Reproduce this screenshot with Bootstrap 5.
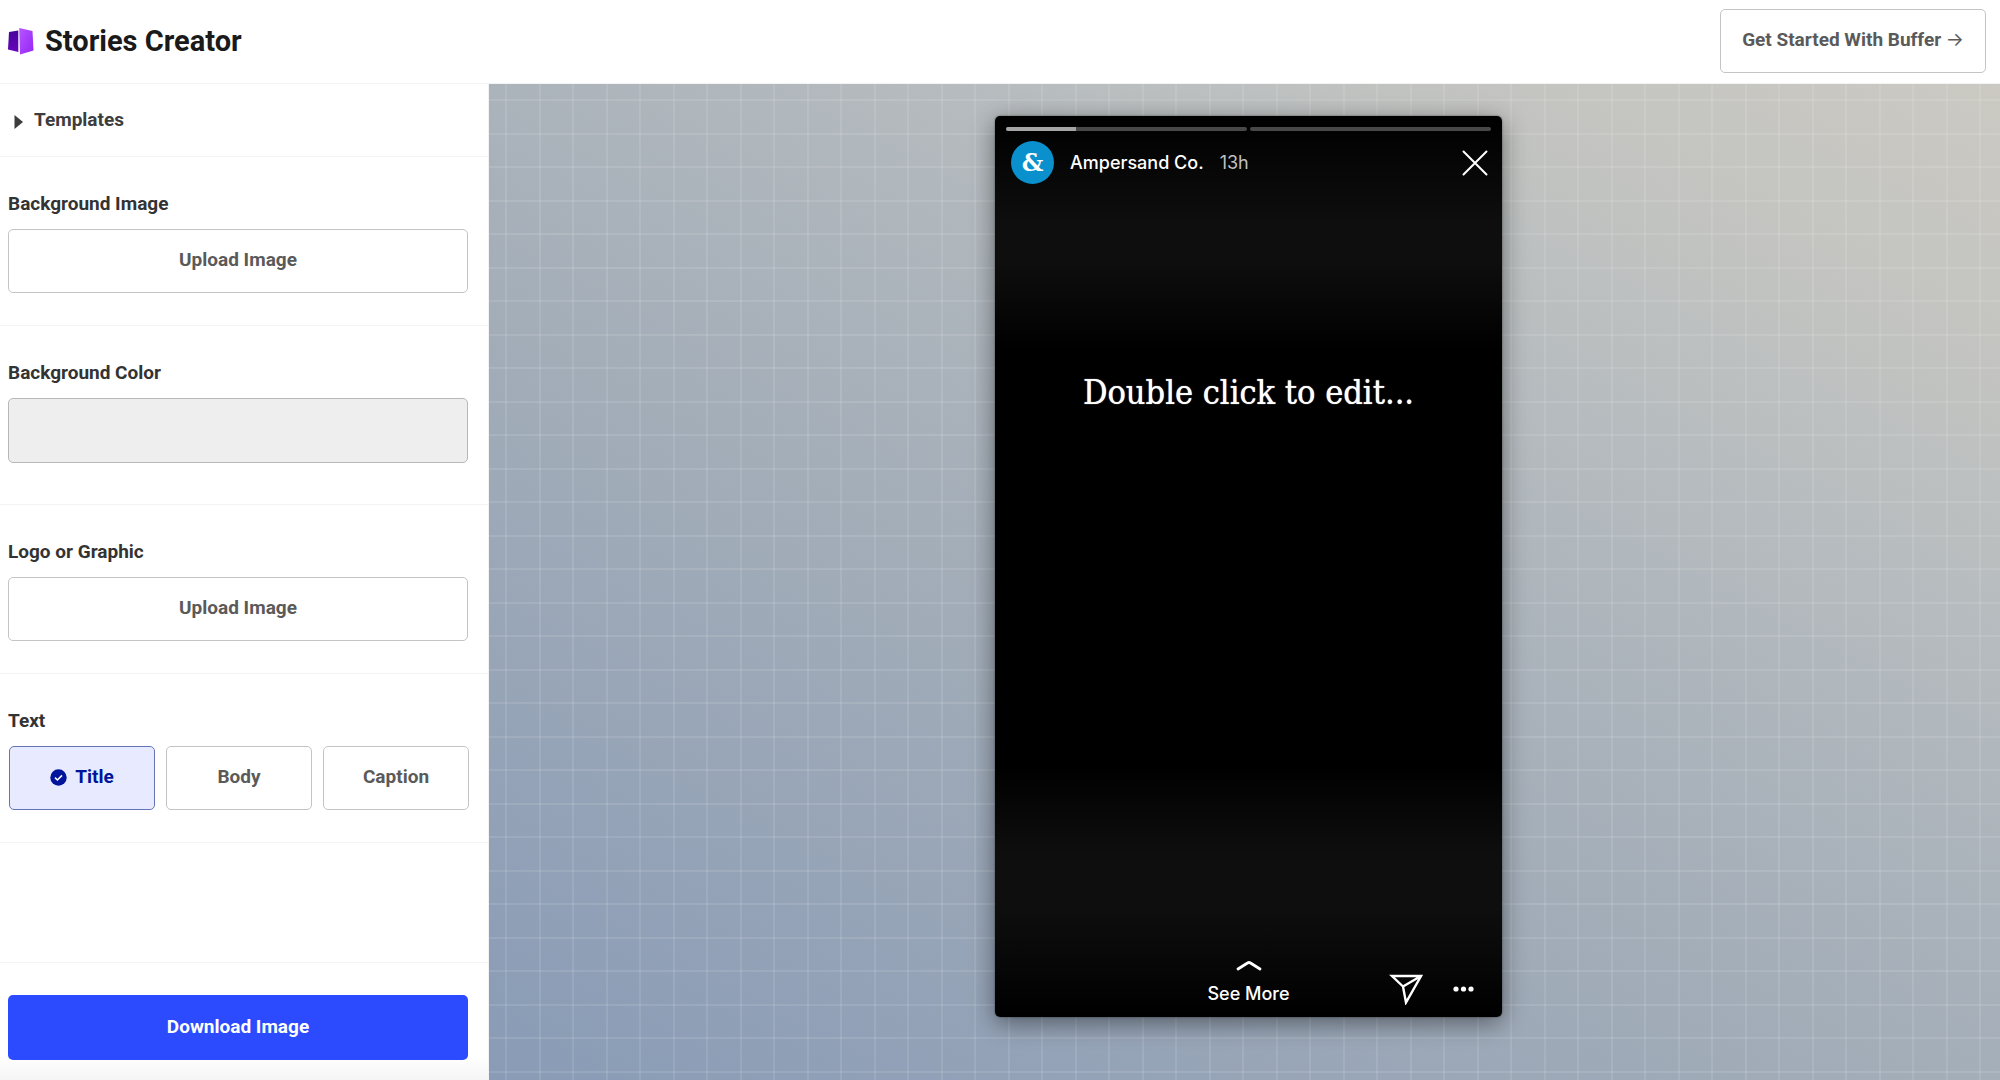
<!DOCTYPE html>
<html lang="en">
<head>
<meta charset="utf-8">
<meta name="viewport" content="width=device-width, initial-scale=1">
<title>Stories Creator</title>
<link href="https://cdn.jsdelivr.net/npm/bootstrap@5.3.0/dist/css/bootstrap.min.css" rel="stylesheet">
<style>
body { font-family: Roboto, "Liberation Sans", sans-serif; font-size: 19px; line-height: 24px; color: #333; background: #fff; }
.topbar { height: 84px; padding: 0 14px 2px 8px; border-bottom: 1px solid #f3f3f3; }
.brand { gap: 11px; font-size: 29px; line-height: 36px; font-weight: 700; color: #1a1a1a; }
.brand:hover { color: #1a1a1a; }
.tool-btn { min-height: 64px; padding-bottom: 8px; border: 1px solid #c4c4c4; border-radius: 5px; background: #fff; color: #5a5a5a; font-size: 19px; line-height: 24px; font-weight: 700; }
.tool-btn:hover { background: #f5f5f5; border-color: #b8b8b8; color: #3d3d3d; }
.start-btn { padding-left: 21px; padding-right: 21px; }
.arrow { font-family: Inter, sans-serif; font-weight: 400; }
.side { width: 489px; border-right: 1px solid #f3f3f3; }
.section { padding: 35px 20px 32px 8px; border-bottom: 1px solid #f3f3f3; }
.section-label { display: block; margin-bottom: 13px; font-weight: 700; color: #333; }
.templates { padding: 24px 14px; gap: 11px; border: 0; border-bottom: 1px solid #f3f3f3; background: #fff; color: #3d3d3d; font-weight: 700; }
.color-field { padding-bottom: 41px; }
.color-box { height: 65px; border: 1px solid #b8b8b8; border-radius: 5px; background: #eee; }
.kinds { gap: 11px; padding-left: 1px; margin-right: -1px; }
.btn-check:checked + .tool-btn { background: #e8ebff; border-color: #6374b8; color: #00149c; }
.side-foot { padding: 32px 20px 20px 8px; border-top: 1px solid #f3f3f3; background: linear-gradient(#fff 80%, #f5f5f5); }
.save-btn, .save-btn:hover { min-height: 65px; padding-bottom: 8px; border: 0; border-radius: 5px; background: #2c4bff; color: #fff; font-size: 19px; line-height: 24px; font-weight: 700; }
.stage {
  padding: 32px 0 32px 8px;
  background:
    repeating-linear-gradient(90deg, transparent 0 16px, rgba(255,255,255,.1) 16px 18px, transparent 18px 50px, rgba(255,255,255,.1) 50px 52px, transparent 52px 67px),
    repeating-linear-gradient(180deg, transparent 0 15px, rgba(255,255,255,.1) 15px 17px, transparent 17px 49px, rgba(255,255,255,.1) 49px 51px, transparent 51px 67px),
    linear-gradient(28deg, #899bb6 0%, #a3adb8 42%, #abb3bb 55%, #b8bdbf 72%, #c3c4c1 84%, #cbc9c2 100%);
}
.story {
  width: 507px; min-height: 901px; padding: 11px; border-radius: 5px; color: #fff; font-size: 18px;
  background: linear-gradient(#000 0, #0e0e0e 12%, #0e0e0e 16%, #000 26%, #000 72%, #0e0e0e 82%, #0e0e0e 88%, #000 100%);
  box-shadow: 0 6px 24px rgba(0,0,0,.45), 0 0 2px rgba(0,0,0,.5);
}
.bars { gap: 3px; }
.story-bar { height: 4px; border-radius: 2px; background: #484848; --bs-progress-bar-bg: #a5a5a5; }
.who { padding: 10px 3px 0 5px; }
.avatar { width: 43px; height: 43px; border-radius: 50%; background: #0a90cc; font: 700 24px/43px "DejaVu Serif", serif; margin-right: 16px; }
.who-name { font-family: Inter, sans-serif; font-weight: 500; margin-right: 16px; }
.who-time { font-family: Inter, sans-serif; color: #c0c0c0; }
.plain-btn { border: 0; padding: 0; background: none; color: #fff; line-height: 0; }
.story-title { margin-top: 184px; font: 400 34px/48px "DejaVu Serif Condensed", "DejaVu Serif", serif; text-shadow: 0 0 1px #fff; }
.more { font-family: Inter, sans-serif; font-weight: 500; color: #fff; gap: 11px; }
.more:hover { color: #fff; }
.acts { gap: 30px; padding-top: 12px; margin-right: 17px; }
</style>
</head>
<body class="d-flex flex-column min-vh-100">
<header class="topbar d-flex align-items-center justify-content-between">
  <a class="brand d-flex align-items-center text-decoration-none" href="#">
    <svg width="26" height="28" viewBox="0 0 26 28" aria-hidden="true">
      <defs>
        <linearGradient id="lg" x1="0" y1="0" x2="1" y2="1"><stop offset="0" stop-color="#b855ff"/><stop offset="1" stop-color="#9326f5"/></linearGradient>
        <linearGradient id="dk" x1="0" y1="0" x2="0" y2="1"><stop offset="0" stop-color="#48039a"/><stop offset="1" stop-color="#6704bb"/></linearGradient>
      </defs>
      <path fill="url(#dk)" d="M1 5 10.300 3.500V25L0 22.500z"/>
      <path fill="url(#lg)" d="M11.200 1 24.500 4 25.500 23.500 12 27.500z"/>
    </svg>
    <span>Stories Creator</span>
  </a>
  <button type="button" class="btn tool-btn start-btn">Get Started With Buffer <span class="arrow">→</span></button>
</header>
<div class="d-flex flex-grow-1">
  <aside class="side d-flex flex-column flex-shrink-0">
    <button type="button" class="templates d-flex align-items-center text-start" aria-expanded="false">
      <svg width="9" height="14" viewBox="0 0 9 14" aria-hidden="true" class="mt-1"><path fill="#3d3d3d" d="M.5 0 9 7 .5 14z"/></svg>
      <span>Templates</span>
    </button>
    <div class="section">
      <label class="section-label" for="bg-image">Background Image</label>
      <button type="button" id="bg-image" class="btn tool-btn w-100">Upload Image</button>
    </div>
    <div class="section color-field">
      <label class="section-label" for="bg-color">Background Color</label>
      <button type="button" id="bg-color" class="color-box d-block w-100"></button>
    </div>
    <div class="section">
      <label class="section-label" for="logo-image">Logo or Graphic</label>
      <button type="button" id="logo-image" class="btn tool-btn w-100">Upload Image</button>
    </div>
    <div class="section" role="group" aria-labelledby="text-label">
      <span class="section-label" id="text-label">Text</span>
      <div class="kinds d-flex">
        <input type="radio" class="btn-check" name="kind" id="kind-title" checked>
        <label class="btn tool-btn d-flex flex-fill align-items-center justify-content-center gap-2 w-100" for="kind-title">
          <svg width="17" height="17" viewBox="0 0 17 17" aria-hidden="true"><circle cx="8.500" cy="8.500" r="8.200" fill="#00149c"/><path d="m5 8.700 2.400 2.300 4.600-4.600" fill="none" stroke="#fff" stroke-width="1.600"/></svg>
          Title</label>
        <input type="radio" class="btn-check" name="kind" id="kind-body">
        <label class="btn tool-btn d-flex flex-fill align-items-center justify-content-center w-100" for="kind-body">Body</label>
        <input type="radio" class="btn-check" name="kind" id="kind-caption">
        <label class="btn tool-btn d-flex flex-fill align-items-center justify-content-center w-100" for="kind-caption">Caption</label>
      </div>
    </div>
    <div class="side-foot mt-auto">
      <button type="button" class="btn save-btn w-100">Download Image</button>
    </div>
  </aside>
  <main class="stage d-flex flex-grow-1 justify-content-center align-items-start">
    <article class="story d-flex flex-column">
      <div class="bars d-flex">
        <div class="progress story-bar flex-fill"><div class="progress-bar" style="width:29%"></div></div>
        <div class="progress story-bar flex-fill"></div>
      </div>
      <div class="who d-flex align-items-center">
        <span class="avatar text-center">&amp;</span>
        <span class="who-name">Ampersand Co.</span>
        <span class="who-time">13h</span>
        <button type="button" class="plain-btn ms-auto" aria-label="Close">
          <svg width="26" height="26" viewBox="0 0 26 26" fill="none" stroke="#fff" stroke-width="2" stroke-linecap="round"><path d="M1.500 1.500 24.500 24.500M24.500 1.500 1.500 24.500"/></svg>
        </button>
      </div>
      <div class="story-title text-center" contenteditable="true" spellcheck="false">Double click to edit...</div>
      <div class="row g-0 align-items-center mt-auto">
        <div class="col"></div>
        <a href="#" class="more col-auto d-flex flex-column align-items-center text-decoration-none">
          <svg width="26" height="11" viewBox="0 0 26 11" fill="none" stroke="#fff" stroke-width="2.800" stroke-linecap="round" stroke-linejoin="round" aria-hidden="true"><path d="M2 9 11.500 3Q13 2 14.500 3L24 9"/></svg>
          See More
        </a>
        <div class="col">
          <div class="acts d-flex justify-content-end align-items-center">
            <button type="button" class="plain-btn" aria-label="Send">
              <svg width="34" height="31" viewBox="0 0 34 31" fill="none" stroke="#fff" stroke-width="2.400" stroke-linejoin="miter"><path d="M3 2H32L17 28.500 14 12.500zM14 12.500 32 2"/></svg>
            </button>
            <button type="button" class="plain-btn" aria-label="More options">
              <svg width="21" height="6" viewBox="0 0 21 6" fill="#fff"><circle cx="3" cy="3" r="2.600"/><circle cx="10.500" cy="3" r="2.600"/><circle cx="18" cy="3" r="2.600"/></svg>
            </button>
          </div>
        </div>
      </div>
    </article>
  </main>
</div>
<script src="https://cdn.jsdelivr.net/npm/bootstrap@5.3.0/dist/js/bootstrap.bundle.min.js"></script>
</body>
</html>
